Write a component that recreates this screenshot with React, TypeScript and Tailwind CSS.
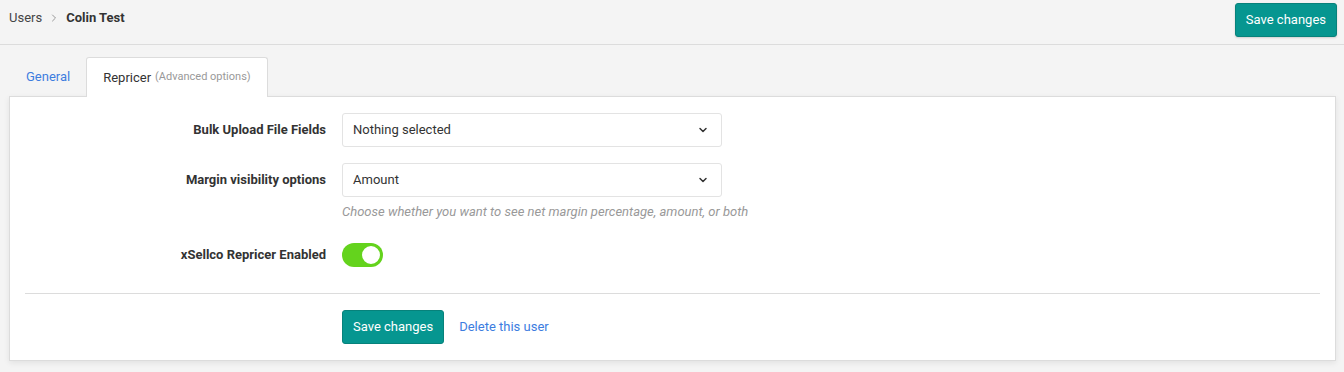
import { ChevronDown, ChevronRight } from 'lucide-react';

function SelectBox({ value }: { value: string }) {
  return (
    <div className="flex h-[34px] w-[380px] items-center justify-between rounded-[3px] border border-[#e3e3e3] bg-white pl-[10px] pr-[12px] text-[13px] text-[#333]">
      <span>{value}</span>
      <ChevronDown size={12} strokeWidth={3} className="text-[#333]" />
    </div>
  );
}

function FieldRow({ label, children }: { label: string; children: React.ReactNode }) {
  return (
    <div className="flex items-start">
      <div className="w-[332px] shrink-0 pr-[16px] pt-[7px] text-right text-[13px] font-bold text-[#333]">
        {label}
      </div>
      <div>{children}</div>
    </div>
  );
}

export default function App() {
  return (
    <div
      className="h-[372px] w-[1344px] bg-[#f4f4f4]"
      style={{ fontFamily: 'Roboto, "Liberation Sans", sans-serif' }}
    >
      <div className="flex h-[45px] items-start justify-between border-b border-[#dcdcdc] pl-[9px] pr-[7px] pt-[3px]">
        <div className="mt-[5px] flex items-center text-[13px]">
          <span className="text-[#444]">Users</span>
          <ChevronRight size={12} className="mx-[6px] text-[#999]" />
          <span className="font-bold text-[#333]">Colin Test</span>
        </div>
        <button
          type="button"
          className="h-[34px] rounded-[3px] border border-[#07827b] bg-[#069690] px-[10px] text-[13px] text-white shadow-[0_1px_2px_rgba(0,0,0,0.15)]"
        >
          Save changes
        </button>
      </div>

      <div className="px-[9px] pt-[12px]">
        <div className="flex items-end pl-[1px]">
          <div className="flex h-[39px] items-center px-[16px] text-[13px] text-[#3d7ddf]">General</div>
          <div className="relative -mb-px flex h-[40px] items-center rounded-t-[3px] border border-b-0 border-[#dcdcdc] bg-white px-[16px] text-[13px] text-[#333]">
            Repricer
            <span className="ml-[4px] text-[11px] text-[#999]">(Advanced options)</span>
          </div>
        </div>

        <div className="w-[1327px] border border-[#dcdcdc] bg-white pb-[16px] shadow-[0_2px_6px_rgba(0,0,0,0.08)]">
          <div className="flex flex-col gap-[16px] pt-[16px]">
            <FieldRow label="Bulk Upload File Fields">
              <SelectBox value="Nothing selected" />
            </FieldRow>
            <FieldRow label="Margin visibility options">
              <SelectBox value="Amount" />
              <div className="mt-[5px] text-[13px] italic text-[#999]">
                Choose whether you want to see net margin percentage, amount, or both
              </div>
            </FieldRow>
          </div>

          <div className="mt-[21px] flex items-center">
            <div className="w-[332px] shrink-0 pr-[16px] text-right text-[13px] font-bold text-[#333]">
              xSellco Repricer Enabled
            </div>
            <div className="flex h-[24px] w-[41px] items-center justify-end rounded-full bg-[#64d31d] p-[1px]">
              <div className="h-[22px] w-[22px] rounded-full border-2 border-[#64d31d] bg-white" />
            </div>
          </div>

          <div className="mx-[15px] mt-[26px] border-t border-[#dcdcdc]" />

          <div className="mt-[16px] flex items-center pl-[332px]">
            <button
              type="button"
              className="h-[34px] rounded-[3px] border border-[#07827b] bg-[#069690] px-[10px] text-[13px] text-white"
            >
              Save changes
            </button>
            <span className="ml-[15px] text-[13px] text-[#3d7ddf]">Delete this user</span>
          </div>
        </div>
      </div>
    </div>
  );
}
